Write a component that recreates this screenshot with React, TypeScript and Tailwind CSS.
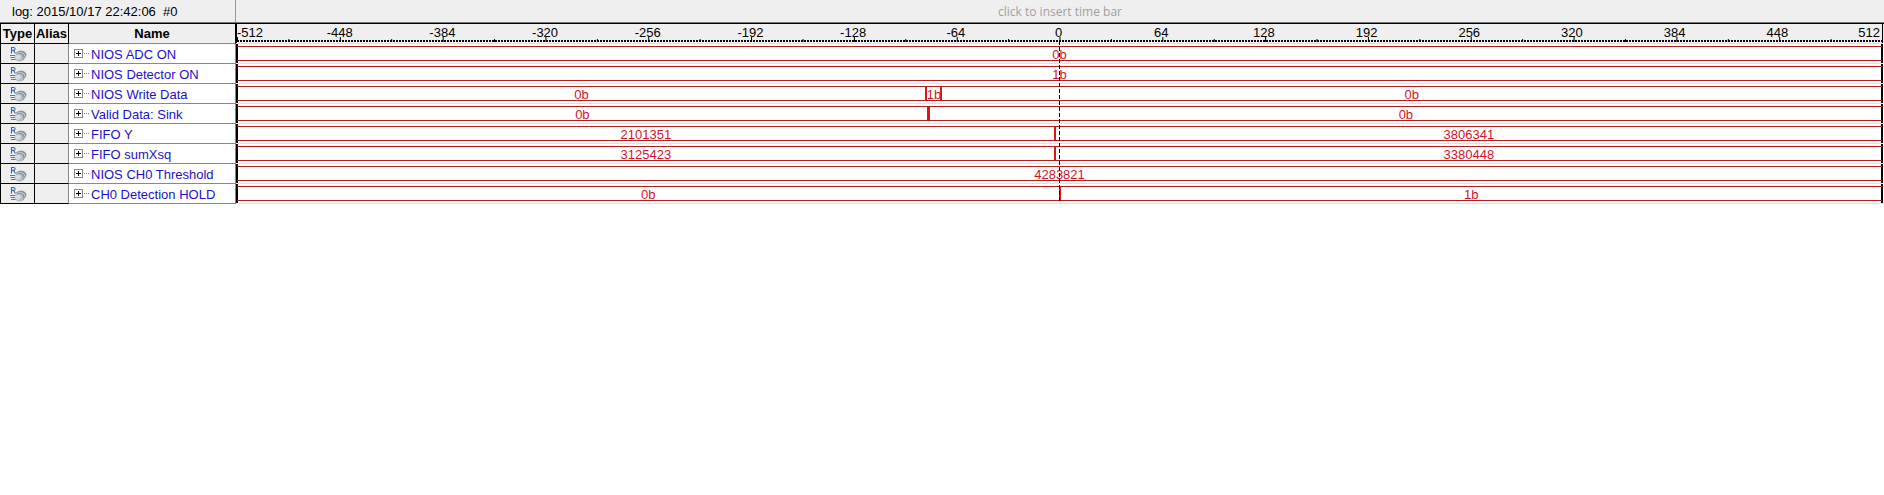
type Segment = { span: number; value?: string; wide?: boolean };
type Signal = { name: string; segments: Segment[] };

const signals: Signal[] = [
  { name: "NIOS ADC ON", segments: [{ span: 1024, value: "0b" }] },
  { name: "NIOS Detector ON", segments: [{ span: 1024, value: "1b" }] },
  { name: "NIOS Write Data", segments: [{ span: 429, value: "0b" }, { span: 9, value: "1b" }, { span: 586, value: "0b" }] },
  { name: "Valid Data: Sink", segments: [{ span: 430, value: "0b" }, { span: 594, value: "0b", wide: true }] },
  { name: "FIFO Y", segments: [{ span: 509, value: "2101351" }, { span: 515, value: "3806341" }] },
  { name: "FIFO sumXsq", segments: [{ span: 509, value: "3125423" }, { span: 515, value: "3380448" }] },
  { name: "NIOS CH0 Threshold", segments: [{ span: 1024, value: "4283821" }] },
  { name: "CH0 Detection HOLD", segments: [{ span: 512, value: "0b" }, { span: 512, value: "1b" }] },
];

const ticks = Array.from({ length: 17 }, (_, i) => -512 + i * 64);

function RegisterIcon() {
  return (
    <svg width="18" height="18" viewBox="0 0 18 18" fill="none" className="mx-auto block" role="img" aria-label="Register group">
      <path d="M2.5 8.5V2.5H4.8Q6.2 2.7 6.1 4Q6 5.4 4.4 5.4H2.5M4.6 5.5L6.4 8.5" stroke="#3d67a5" strokeWidth="1.1" />
      <path d="M1 10.5H6M1.5 12.5H6M2 14.5H7" stroke="#cf4a5c" />
      <ellipse cx="12.6" cy="9.6" rx="4.8" ry="3.7" fill="#7d8891" transform="rotate(20 12.6 9.6)" />
      <ellipse cx="11.9" cy="10.7" rx="4.7" ry="3.8" fill="#c2cad1" transform="rotate(20 11.9 10.7)" />
      <ellipse cx="11" cy="11.9" rx="4.7" ry="4" fill="#75808a" transform="rotate(20 11 11.9)" />
      <ellipse cx="10.2" cy="12.6" rx="4.5" ry="4" fill="#b4bdc5" transform="rotate(20 10.2 12.6)" />
      <ellipse cx="9" cy="12.2" rx="2.7" ry="2.4" fill="#d6dce1" />
      <path d="M6.5 8Q9.5 5.8 13 6.2T17.4 10" stroke="#8c969e" strokeWidth="0.8" />
    </svg>
  );
}

function Ruler() {
  return (
    <div className="relative h-[19px] border-x border-black pt-px">
      <svg className="absolute inset-x-0 bottom-0 h-[6px] w-full" aria-hidden="true">
        <line x1="0" y1="4" x2="100%" y2="4" stroke="#000" strokeWidth="2" strokeDasharray="2 1" />
        {Array.from({ length: 33 }, (_, i) => (
          <rect key={i} x={`${(i * 100) / 32}%`} y={i % 2 ? 2 : 0} width="1" height={i % 2 ? 3 : 5} />
        ))}
      </svg>
      <div className="flex justify-between">
        {ticks.map((t, i) => (
          <span
            key={t}
            className={
              i === 0
                ? "flex w-0 justify-start"
                : i === 16
                  ? "flex w-0 justify-end pr-[2px]"
                  : "flex w-0 justify-center"
            }
          >
            {t}
          </span>
        ))}
      </div>
    </div>
  );
}

function Wave({ segments }: { segments: Segment[] }) {
  return (
    <div className="h-[19px] border-x-2 border-black pt-[2px]">
      <div className="-mx-px flex h-[15px] border-y border-[#b81c1c]">
        {segments.map((s, i) => (
          <div key={i} style={{ flexGrow: s.span }} className="min-w-0 basis-0">
            <div
              className={`flex h-full justify-center border-[#e01414] ${i === 0 ? "" : s.wide ? "-ml-px border-l-3" : "-ml-px border-l-2"}`}
            >
              <span className="leading-[15px] text-[#d3122a]">{s.value}</span>
            </div>
          </div>
        ))}
      </div>
    </div>
  );
}

export default function App() {
  return (
    <main className="min-h-screen bg-white font-['Liberation_Sans',Arial,sans-serif] text-[13px] text-black">
      <header className="flex h-[23px] border-b border-[#777] bg-[#efefef]">
        <div className="w-[236px] border-r border-[#999] pl-3 leading-[24px] whitespace-pre">log: 2015/10/17 22:42:06  #0</div>
        <button className="flex-1 font-['Open_Sans','Noto_Sans',sans-serif] text-[12px] leading-[24px] text-[#a0a0a0]">
          click to insert time bar
        </button>
      </header>
      <div className="relative">
        <table className="w-full table-fixed border-separate border-spacing-0 border-t border-black">
          <colgroup>
            <col className="w-[35px]" />
            <col className="w-[34px]" />
            <col className="w-[167px]" />
            <col />
          </colgroup>
          <thead className="bg-[#efefef] leading-[19px]">
            <tr>
              <th className="h-5 border-r border-b border-l border-black p-0 pt-px leading-[18px]">Type</th>
              <th className="border-r border-b border-black p-0 pt-px leading-[18px]">Alias</th>
              <th className="border-r border-b border-r-black border-b-[#888] p-0 pt-px leading-[18px]">Name</th>
              <th className="border-b border-[#d8dde0] p-0 pr-px leading-[15px] font-normal">
                <Ruler />
              </th>
            </tr>
          </thead>
          <tbody>
            {signals.map((s) => (
              <tr key={s.name}>
                <td className="h-5 border-r border-b border-l border-black bg-[#efefef] p-0">
                  <RegisterIcon />
                </td>
                <td className="border-r border-b border-r-[#888] border-b-black bg-[#efefef] p-0" />
                <td className="border-r border-b border-[#888] p-0">
                  <div className="flex h-[19px] items-center pl-[5px]">
                    <button aria-label={`Expand ${s.name}`} className="flex size-[9px] items-center justify-center border border-[#888]">
                      <svg width="5" height="5" aria-hidden="true">
                        <path d="M0 2.5H5M2.5 0V5" stroke="#000" />
                      </svg>
                    </button>
                    <span className="mr-[2px] ml-px w-[5px] border-t border-dotted border-[#888]" />
                    <span className="pt-[2px] leading-[17px] text-[#1c10c8]">{s.name}</span>
                  </div>
                </td>
                <td className="border-b border-[#dde1ea] p-0 pr-px">
                  <Wave segments={s.segments} />
                </td>
              </tr>
            ))}
          </tbody>
        </table>
        <div className="pointer-events-none absolute top-[18px] right-[2px] bottom-[2px] left-[237px] flex justify-center">
          <div className="w-px bg-[repeating-linear-gradient(to_bottom,#000_0_4px,transparent_4px_6px)]" />
        </div>
      </div>
    </main>
  );
}
